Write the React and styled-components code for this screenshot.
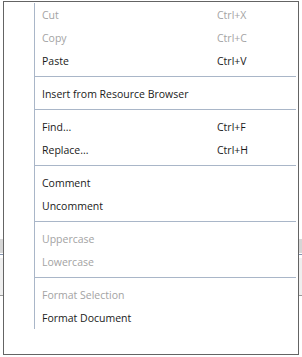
import styled, { createGlobalStyle } from 'styled-components';
import { Fragment } from 'react';

const GlobalStyle = createGlobalStyle`
  html, body {
    margin: 0;
    padding: 0;
    background: #ffffff;
  }
  body {
    font-family: "Open Sans", "Noto Sans", sans-serif;
  }
`;

const Colors = {
  border: '#646464',
  rule: '#a9b6c8',
  text: '#1a1a1a',
  disabled: '#a3a3a3',
};

//the app window behind the popup
const Stage = styled.div`
  position: relative;
  width: 302px;
  height: 357px;
  overflow: hidden;
  background: #ffffff;
`;

const Backdrop = styled.div`
  display: flex;
  flex-direction: column;
  padding-top: 239px;
`;

const ToolStrip = styled.div`
  height: 14px;
  background: #d6d6d6;
`;

const StripRule = styled.div`
  height: 1px;
  margin-top: ${(p) => p.gap}px;
  background: #8494b0;
`;

const Panel = styled.div`
  height: 37px;
  margin-top: 3px;
  background: #efefef;
  border-bottom: 1px solid #9a9a9a;
`;

//context menu
const Menu = styled.div`
  position: absolute;
  left: 3px;
  top: 1px;
  width: 294px;
  height: 351px;
  background: #ffffff;
  border: 1px solid ${Colors.border};
  padding-top: 1px;
  box-sizing: content-box;
`;

const List = styled.ul`
  list-style: none;
  margin: 0 0 0 30px;
  padding: 0;
  border-left: 1px solid ${Colors.rule};
`;

const Item = styled.li`
  display: grid;
  grid-template-columns: 175px 1fr;
  align-items: center;
  height: 23px;
  padding-left: 7px;
  font-size: 10.5px;
  color: ${(p) => (p.disabled ? Colors.disabled : Colors.text)};
  white-space: nowrap;
`;

const Separator = styled.li`
  height: 1px;
  margin: 4px 2px 5px 0;
  background: ${Colors.rule};
`;

const sections = [
  [
    { label: 'Cut', key: 'Ctrl+X', disabled: true },
    { label: 'Copy', key: 'Ctrl+C', disabled: true },
    { label: 'Paste', key: 'Ctrl+V' },
  ],
  [{ label: 'Insert from Resource Browser' }],
  [
    { label: 'Find...', key: 'Ctrl+F' },
    { label: 'Replace...', key: 'Ctrl+H' },
  ],
  [{ label: 'Comment' }, { label: 'Uncomment' }],
  [
    { label: 'Uppercase', disabled: true },
    { label: 'Lowercase', disabled: true },
  ],
  [
    { label: 'Format Selection', disabled: true },
    { label: 'Format Document' },
  ],
];

const App = () => {
  return (
    <>
      <GlobalStyle />
      <Stage>
        <Backdrop>
          <ToolStrip />
          <StripRule gap={1} />
          <Panel />
        </Backdrop>
        <Menu>
          <List>
            {sections.map((group, i) => (
              <Fragment key={i}>
                {i > 0 && <Separator />}
                {group.map((it) => (
                  <Item key={it.label} disabled={it.disabled}>
                    <span>{it.label}</span>
                    <span>{it.key}</span>
                  </Item>
                ))}
              </Fragment>
            ))}
          </List>
        </Menu>
      </Stage>
    </>
  );
};

export default App;
